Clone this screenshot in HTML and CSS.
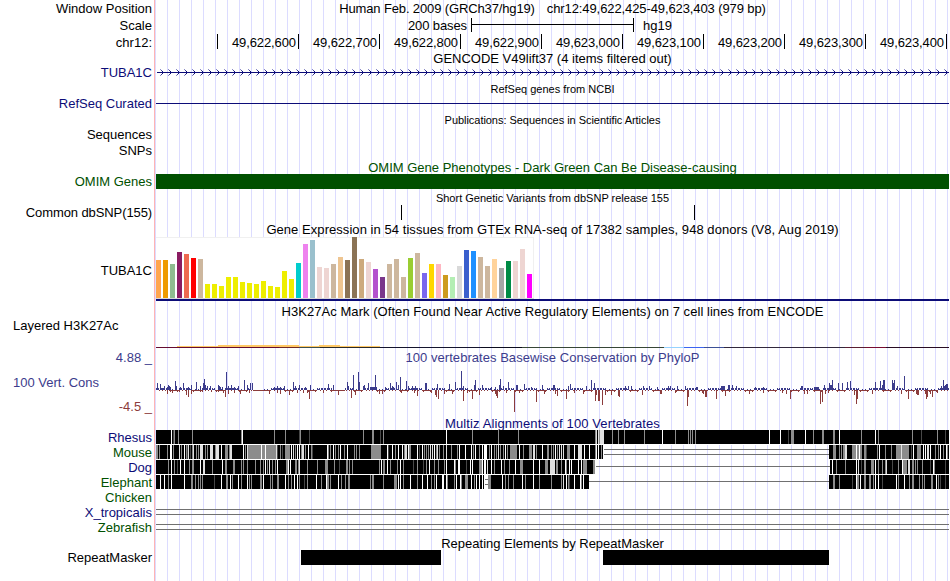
FILE: index.html
```html
<!DOCTYPE html>
<html lang="en">
<head>
    <meta charset="UTF-8">
    <meta name="viewport" content="width=device-width, initial-scale=1.0">
    <title>Human chr12:49,622,425-49,623,403 - Genome Browser</title>
    <link rel="stylesheet" href="styles.css">
</head>
<body>
    <div class="browser">
        <!-- Position and ruler -->
        <div class="row ruler-row">
            <div class="label">Window Position</div>
            <div class="title position"><span class="assembly">Human Feb. 2009 (GRCh37/hg19)</span><span class="range">chr12:49,622,425-49,623,403 (979 bp)</span></div>
        </div>
        <div class="row ruler-row">
            <div class="label">Scale</div>
            <div class="track scale">
                <span class="scale-size">200 bases</span>
                <span class="scale-bar"></span>
                <span class="scale-db">hg19</span>
            </div>
        </div>
        <div class="row ruler-row">
            <div class="label chrom">chr12:</div>
            <div class="track ruler">
                <span class="tick first"></span>
                <span class="tick">49,622,600</span>
                <span class="tick">49,622,700</span>
                <span class="tick">49,622,800</span>
                <span class="tick">49,622,900</span>
                <span class="tick">49,623,000</span>
                <span class="tick">49,623,100</span>
                <span class="tick">49,623,200</span>
                <span class="tick">49,623,300</span>
                <span class="tick">49,623,400</span>
            </div>
        </div>

        <!-- Genes -->
        <div class="row title-row short"><div class="title gencode">GENCODE V49lift37 (4 items filtered out)</div></div>
        <div class="row navy">
            <div class="label">TUBA1C</div>
            <svg class="track" id="gene" viewBox="156 0 793 15"></svg>
        </div>
        <div class="row title-row"><div class="title small refseq">RefSeq genes from NCBI</div></div>
        <div class="row navy">
            <div class="label">RefSeq Curated</div>
            <svg class="track" viewBox="156 0 793 15"><rect class="navy-fill" x="156" y="7" width="793" height="1"/></svg>
        </div>
        <div class="row title-row"><div class="title small pubs">Publications: Sequences in Scientific Articles</div></div>
        <div class="row"><div class="label">Sequences</div></div>
        <div class="row snps"><div class="label">SNPs</div></div>
        <div class="row title-row green"><div class="title omim">OMIM Gene Phenotypes - Dark Green Can Be Disease-causing</div></div>
        <div class="row green">
            <div class="label">OMIM Genes</div>
            <div class="track omim-bar"></div>
        </div>
        <div class="row title-row"><div class="title small dbsnp">Short Genetic Variants from dbSNP release 155</div></div>
        <div class="row">
            <div class="label tight">Common dbSNP(155)</div>
            <svg class="track" viewBox="156 0 793 15">
                <rect x="401" y="0" width="1" height="15"/>
                <rect x="694" y="0" width="1" height="15"/>
            </svg>
        </div>

        <!-- Expression -->
        <div class="row title-row"><div class="title gtex">Gene Expression in 54 tissues from GTEx RNA-seq of 17382 samples, 948 donors (V8, Aug 2019)</div></div>
        <div class="row gtex-row">
            <div class="label">TUBA1C</div>
            <svg class="track" id="gtex" viewBox="156 236 793 67"></svg>
        </div>

        <!-- Regulation -->
        <div class="row title-row"><div class="title h3k">H3K27Ac Mark (Often Found Near Active Regulatory Elements) on 7 cell lines from ENCODE</div></div>
        <div class="row h3k-row">
            <div class="label left">Layered H3K27Ac</div>
            <svg class="track" id="h3k" viewBox="156 319 793 31"></svg>
        </div>

        <!-- Conservation -->
        <div class="row cons-row">
            <div class="cons-labels">
                <span class="cons-max">4.88 _</span>
                <span class="cons-name">100 Vert. Cons</span>
                <span class="cons-min">-4.5 _</span>
            </div>
            <div class="cons-body">
                <div class="title phylop">100 vertebrates Basewise Conservation by PhyloP</div>
                <svg class="track" id="phylop" viewBox="156 365 793 50"></svg>
            </div>
        </div>
        <div class="row title-row short navy"><div class="title multiz">Multiz Alignments of 100 Vertebrates</div></div>
        <div class="row navy"><div class="label">Rhesus</div><svg class="track" id="rhesus" viewBox="156 0 793 15"></svg></div>
        <div class="row green"><div class="label">Mouse</div><svg class="track" id="mouse" viewBox="156 0 793 15"></svg></div>
        <div class="row navy"><div class="label">Dog</div><svg class="track" id="dog" viewBox="156 0 793 15"></svg></div>
        <div class="row green"><div class="label">Elephant</div><svg class="track" id="elephant" viewBox="156 0 793 15"></svg></div>
        <div class="row green"><div class="label">Chicken</div></div>
        <div class="row navy"><div class="label">X_tropicalis</div><div class="track double-line"></div></div>
        <div class="row green"><div class="label">Zebrafish</div><div class="track double-line"></div></div>

        <!-- Repeats -->
        <div class="row title-row short"><div class="title repeats">Repeating Elements by RepeatMasker</div></div>
        <div class="row">
            <div class="label">RepeatMasker</div>
            <svg class="track" viewBox="156 0 793 15">
                <rect x="301" y="0" width="140" height="15"/>
                <rect x="603" y="0" width="226" height="15"/>
            </svg>
        </div>
    </div>
    <script src="tracks.js"></script>
</body>
</html>
```
FILE: styles.css
```css
html, body {
    margin: 0;
    background: #fff;
}
body {
    width: 950px;
    height: 581px;
    overflow: hidden;
    font-family: "Liberation Sans", Arial, Helvetica, sans-serif;
    font-size: 13px;
    color: #000;
}
.browser {
    height: 581px;
    /* label column edge on top of the vertical guide lines */
    background:
        linear-gradient(to right, #fff 154px, #ffb4b4 154px, #ffb4b4 155px, transparent 155px),
        linear-gradient(to right, transparent 11px, #dcdcff 11px) 156px 0 / 12px 100%;
}
.row {
    display: grid;
    grid-template-columns: 152px 793px;
    grid-template-rows: 100%;
    column-gap: 4px;
    height: 15px;
    line-height: 15px;
    white-space: nowrap;
}
.ruler-row {
    height: 17px;
    line-height: 17px;
}
.title-row {
    height: 16px;
    line-height: 18px;
}
.title-row.short {
    height: 14px;
    line-height: 15px;
}
.title-row.short.navy, .title-row.short.navy ~ .title-row.short {
    height: 15px;
    line-height: 18px;
}
.snps {
    height: 16px;
    line-height: 17px;
}
.label {
    grid-column: 1;
    text-align: right;
}
.label.left {
    text-align: left;
    padding-left: 13px;
    line-height: 14px;
}
.label.tight {
    letter-spacing: -0.1px;
}
.title, .track {
    grid-column: 2;
}
.title {
    text-align: center;
}
.title.small {
    font-size: 11px;
}
svg.track {
    display: block;
    width: 793px;
    height: 100%;
    shape-rendering: crispEdges;
}
.navy {
    color: #0c0c78;
}
.navy-fill {
    fill: #0c0c78;
}
.green {
    color: #005000;
}
.assembly {
    letter-spacing: -0.13px;
}
.range {
    margin-left: 12px;
    letter-spacing: -0.1px;
}
.pubs {
    letter-spacing: -0.04px;
}
.omim {
    line-height: 20px;
}
.gtex {
    line-height: 20px;
    letter-spacing: 0.055px;
}
.h3k {
    letter-spacing: 0.05px;
}
.phylop {
    letter-spacing: 0.04px;
}
.multiz {
    letter-spacing: 0.11px;
}

/* scale and ruler */
.scale {
    display: flex;
    align-items: center;
}
.scale-size {
    width: 311px;
    text-align: right;
    letter-spacing: -0.1px;
}
.scale-bar {
    box-sizing: border-box;
    width: 163px;
    height: 14px;
    margin: 0 9px 0 4px;
    border: solid #000;
    border-width: 0 1px;
    background: linear-gradient(#000, #000) 0 6px / 100% 1px no-repeat;
    position: relative;
    top: -1px;
}
.ruler {
    display: flex;
}
.tick {
    box-sizing: border-box;
    width: 81px;
    height: 15px;
    padding-right: 2px;
    border-right: 1px solid #000;
    text-align: right;
    letter-spacing: -0.1px;
}
.tick.first {
    width: 62px;
}

.omim-bar {
    background: #005000;
}

.gtex-row {
    height: 67px;
    line-height: 69px;
}
.h3k-row {
    height: 31px;
}

/* conservation graph */
.cons-row {
    height: 65px;
}
.cons-labels {
    display: flex;
    flex-direction: column;
    justify-content: space-between;
    height: 64px;
    color: #3c3c8c;
}
.cons-max, .cons-min {
    text-align: right;
}
.cons-name {
    padding-left: 13px;
}
.cons-min {
    color: #8c3c3c;
}
.cons-body {
    color: #3c3c8c;
}
.cons-body .track {
    height: 50px;
}

/* unaligned sequence on both sides of a gap */
.double-line {
    background:
        linear-gradient(#707070, #707070) 0 4px / 100% 1px no-repeat,
        linear-gradient(#707070, #707070) 0 9px / 100% 1px no-repeat;
}
```
FILE: tracks.js
```js
const SVG_NS = 'http://www.w3.org/2000/svg';
const START = 156;
const END = 949;

function rect(svg, x, y, width, height, fill) {
    const el = document.createElementNS(SVG_NS, 'rect');
    el.setAttribute('x', x);
    el.setAttribute('y', y);
    el.setAttribute('width', width);
    el.setAttribute('height', height);
    el.setAttribute('fill', fill);
    svg.appendChild(el);
}

// Intron line with strand arrows
function drawGene() {
    const svg = document.getElementById('gene');
    const fade = ['#8c8cc8', '#3c3c96', '#0c0c78'];
    rect(svg, START + 1, 7, END - START - 1, 1, '#0c0c78');
    for (let x = 160; x < END - 3; x += 8) {
        for (let i = 0; i < 3; i++) {
            rect(svg, x + i, 4 + i, 1, 1, fade[i]);
            rect(svg, x + i, 10 - i, 1, 1, fade[i]);
        }
    }
}

// Median expression per tissue: [height, color]
const tissues = [
    [38, '#ffa54f'], [38, '#ee9a00'], [34, '#8fbc8f'], [46, '#8b1c62'], [44, '#ee6a50'], [40, '#ff0000'],
    [39, '#cdb79e'], [14, '#eeee00'], [14, '#eeee00'], [12, '#eeee00'], [21, '#eeee00'], [21, '#eeee00'],
    [16, '#eeee00'], [15, '#eeee00'], [14, '#eeee00'], [17, '#eeee00'], [12, '#eeee00'], [11, '#eeee00'],
    [27, '#eeee00'], [19, '#eeee00'], [35, '#00cdcd'], [54, '#ee82ee'], [58, '#9ac0cd'], [31, '#eed5d2'],
    [30, '#eed5d2'], [34, '#cdb79e'], [41, '#eec591'], [38, '#8b7355'], [61, '#8b7355'], [39, '#cdaa7d'],
    [36, '#eed5d2'], [29, '#b452cd'], [21, '#7a378b'], [34, '#cdb79e'], [39, '#cdb79e'], [21, '#cdb79e'],
    [40, '#9acd32'], [45, '#cdb79e'], [25, '#7a67ee'], [34, '#ffd700'], [34, '#ffb6c1'], [23, '#cd9b1d'],
    [21, '#b4eeb4'], [32, '#d9d9d9'], [48, '#3a5fcd'], [47, '#1e90ff'], [41, '#cdb79e'], [32, '#cdb79e'],
    [39, '#ffd39b'], [30, '#a6a6a6'], [37, '#008b45'], [37, '#eed5d2'], [49, '#eed5d2'], [24, '#ff00ff']
];

function drawTissues() {
    const svg = document.getElementById('gtex');
    rect(svg, START, 237, 378, 62, '#f0f0f0');
    rect(svg, START, 238, 377, 60, '#ffffff');
    rect(svg, START, 298, 378, 1, '#d8d8d8');
    tissues.forEach(([height, color], i) => rect(svg, START + i * 7, 298 - height, 5, height, color));
    rect(svg, START, 299, END - START, 2, '#0c0c78');
}

function drawH3K27Ac() {
    const svg = document.getElementById('h3k');
    rect(svg, 177, 346, 203, 1, '#ffc864');
    rect(svg, 218, 345, 81, 1, '#ffc864');
    rect(svg, 319, 345, 21, 1, '#ffc864');
    [
        [156, 279, '#640c32'], [279, 299, '#6e2828'], [299, 320, '#3c5050'], [320, 380, '#2a2a2a'],
        [380, 481, '#14142d'], [481, 522, '#0c0c1e'], [522, 664, '#374637'], [664, 684, '#96d2ff'],
        [684, 704, '#3c64f0'], [704, 724, '#3c5096'], [724, 845, '#32283c'], [845, 866, '#5a1e32'],
        [866, 886, '#780c32'], [886, 949, '#280c23']
    ].forEach(([from, to, color]) => rect(svg, from, 347, to - from, 1, color));
}

// Conservation peaks as "x:height"
const conserved = '157:7 160:6 162:2 164:4 167:3 168:5 169:4 170:3 175:9 176:4 180:3 183:7 188:3 191:5 196:8 200:4 203:7 204:11 205:5 207:4 210:4 218:5 219:4 220:3 222:3 226:18 228:4 231:5 234:3 238:4 244:10 247:5 250:7 252:7 274:3 277:4 280:3 284:4 293:8 295:4 299:5 305:3 310:5 328:6 331:2 333:5 347:8 348:4 353:15 358:18 359:8 363:4 364:5 368:7 370:3 371:3 372:3 373:3 374:3 375:15 376:3 385:3 390:7 392:4 393:3 396:8 398:5 400:13 406:9 408:4 412:4 415:4 425:7 426:7 437:6 449:6 455:8 461:19 463:4 474:5 475:10 482:5 491:3 495:3 499:5 500:11 503:4 508:8 516:5 517:5 524:6 531:3 542:5 553:5 554:5 568:4 570:6 586:4 591:10 594:7 625:4 628:4 631:4 643:4 649:4 657:3 668:4 670:4 677:4 685:4 696:3 697:3 721:4 722:4 723:4 724:4 728:5 729:5 732:5 736:4 755:3 763:3 801:4 802:4 814:3 815:3 816:3 817:3 818:3 824:5 829:7 830:5 831:5 832:10 838:7 842:7 847:8 850:9 875:8 880:9 882:5 883:10 884:10 892:10 893:7 894:10 897:4 904:14 941:4 943:10 944:4 945:5 946:6 947:6';
const accelerated = '167:4 172:3 179:2 186:5 188:7 191:4 202:2 211:2 218:2 223:3 225:7 228:4 234:3 240:4 249:3 269:4 277:3 280:4 289:5 297:3 303:3 307:3 309:9 323:3 338:5 351:8 355:5 379:4 382:4 401:3 414:3 417:6 431:3 435:5 436:7 438:9 444:4 452:4 463:11 467:3 472:9 479:5 495:4 496:6 497:8 506:3 514:22 519:3 536:12 544:4 555:4 557:6 566:9 574:3 583:4 595:11 596:5 598:11 599:11 602:15 605:5 611:5 618:6 619:7 642:5 660:4 661:4 675:3 687:16 688:7 702:3 703:4 705:7 706:7 716:9 725:6 749:4 763:3 782:3 786:4 790:9 804:4 807:4 820:14 822:12 825:4 828:3 854:5 856:14 857:9 872:4 901:4 908:9 916:4 917:5 918:5 925:4 926:9 927:7 930:4 932:7 937:3';

function drawPeaks(svg, peaks, up) {
    peaks.split(' ').forEach(peak => {
        const [x, height] = peak.split(':').map(Number);
        rect(svg, x, up ? 390 - height : 390, 1, height, up ? '#3c3c8c' : '#8c3c3c');
    });
}

function drawPhyloP() {
    const svg = document.getElementById('phylop');
    // low scores along the zero line
    for (let x = START; x < END; x++) {
        const n = (x * 7919 + x * x * 31) % 23;
        const neutral = x > 252 && x < 264 || x > 334 && x < 345;
        if (!neutral && n < 14) {
            rect(svg, x, n < 6 ? 388 : 389, 1, n < 6 ? 2 : 1, '#3c3c8c');
        }
        if (neutral || n > 9) {
            rect(svg, x, 390, 1, !neutral && n > 19 ? 2 : 1, '#8c3c3c');
        }
    }
    drawPeaks(svg, conserved, true);
    drawPeaks(svg, accelerated, false);
}

// Alignment quality: stripes as "x shade [width]", l = light, g = grey, d = dark
const shades = { w: '#ffffff', l: '#e0e0e0', g: '#8c8c8c', d: '#484848' };
const alignments = {
    rhesus: {
        blocks: [[156, 949]],
        stripes: '171w 173d 174g 178g 192g 241g 242w 274g 285g 299d 300g 309d 363g 372g2 380d 383g 446w 472g 498g 518g 595g 596l 598l 599g 600l4 612g 618g 624g 644g 662w 675g 688g 690g 692g 695g 769w 780w 788d 791g3 805w 813g 822g2 833g2 839w 861g 875w 878g 912g 921d 937g 945d'
    },
    mouse: {
        blocks: [[156, 603], [829, 949]],
        lines: [[604, 829, 4], [604, 829, 9]],
        stripes: '156g2 159g 167g 170w2 173g 179l 181g 184w 186g 187d 188l 190d 192g 193l 196g 198g 200l3 205g 207g 210l3 215g 216l3 221w 225g3 229g 230l2 243w 245g 247l 248g13 261w 262g3 265w 266g10 276l 277d 280g 282d 285g5 291w 293l 295g 297w 299w 301g 302l2 305g 308w 311g 312d 327w 328g 330g 333w 335g 338g 340w 344g 347w 354g 356g 359g 371g10 387w 388d 392w 395g 398w 402w 404g 405l2 408w 409g2 417w 419d 422w 424g 426g 428g 430l 432l 434w 436g 437l 439g 443g 446l 451g 457g 459w 465w 471w 473g 475w 479g 482w 484w3 489g 491w 494g 496g 498l 500g 503g 505w 507g 510g7 519w 523g 529g3 533l2 536g 542w 547g2 551g 553g 555w 557g 559l 561l 563l 567g3 574w 578l4 584w 589w 595g 596w 598w 601g 833g3 839g 841g 843g2 845l 846l 852g4 856w 857g2 859w 860g2 864g2 866d 877g 879w 885g 891g 896g5 901l 902g7 911d 913w 917g4 923w 925w 927l2 930w 935g 938g 940w 943g 946w 947g'
    },
    dog: {
        blocks: [[156, 595], [830, 949]],
        lines: [[596, 830, 6]],
        stripes: '168g 171w 174g 177d 180w 184w 189g 192g2 200w 203l2 212g 222w 225g2 233g2 241g 243g 247g 255g 260g 263g 265w 267g 269l 272g 275g 277w 286g2 288w 290w 295g 296g 298g 299l 307g 317g 325g3 334g 339d 346g 347g 349g 352g 379g 381w 383g2 387w 390g 397g 400w 403g 413d 417g 423d 426g 429w 434g 438g 444g 446w 454w 455g 458w2 466d 470w 472w 479g3 482w 484w2 487l 491w 494g 501w 504g 509g 515w 520g3 533w 539w 545g3 550l5 556g2 561g 565w 566g 569w 571w 578w 581w 583g4 593g2 832w 836g 845g 856w 858l 861d 864g2 871g3 875w 878g 882g 885g 886l 892d 898g 902w 903g4 908l2 912g2 915g 917g 922g 930d 933w 934g 945d'
    },
    elephant: {
        blocks: [[156, 484], [488, 589], [829, 949]],
        lines: [[485, 488, 4], [485, 488, 9], [589, 829, 6]],
        stripes: '160w 164w 168g 171w 184w 191g2 195g 198g 200g 202g 214d 221w 226g2 230w 232g 238w 241g 247w 249g 251g 260g2 263w 270g 272g 277g2 285w 288g 291g 294w 297w 299g 304d 307g 316w 321g 326w 327g2 330g 338w 341g 345g 348g2 370g 372g2 383g 394g3 398w 400w 403g 410w 417g 422w 427w 431g 434g 436w 442w2 446w 447g 454g 456w 460w 461g 465g3 471w 474g 476w 479w 482w 488g3 502w 505g 508g 513g 522w 525g 533w 539g 551g 561g 563l 566w 568g 569d 574w 580w 581g 583w 833g2 839g 852d 856w 857g2 860w 864g2 869g2 873g 875w 878w 882d 896w 898g 904w 909g 912g2 919g 922g 924g 931g2 936w 938g 940d 945d'
    }
};

function drawAlignment(name) {
    const svg = document.getElementById(name);
    const data = alignments[name];
    const height = 14;
    data.blocks.forEach(([from, to]) => rect(svg, from, 0, to - from, height, '#000000'));
    (data.lines || []).forEach(([from, to, y]) => rect(svg, from, y, to - from, 1, '#707070'));
    data.stripes.split(' ').forEach(stripe => {
        const [, x, shade, width] = stripe.match(/^(\d+)([wlgd])(\d*)$/);
        rect(svg, x, 0, width || 1, height, shades[shade]);
    });
    // separator under each species
    data.blocks.forEach(([from, to]) => rect(svg, from, height, to - from, 1, '#ffffff'));
}

drawGene();
drawTissues();
drawH3K27Ac();
drawPhyloP();
Object.keys(alignments).forEach(drawAlignment);
```
